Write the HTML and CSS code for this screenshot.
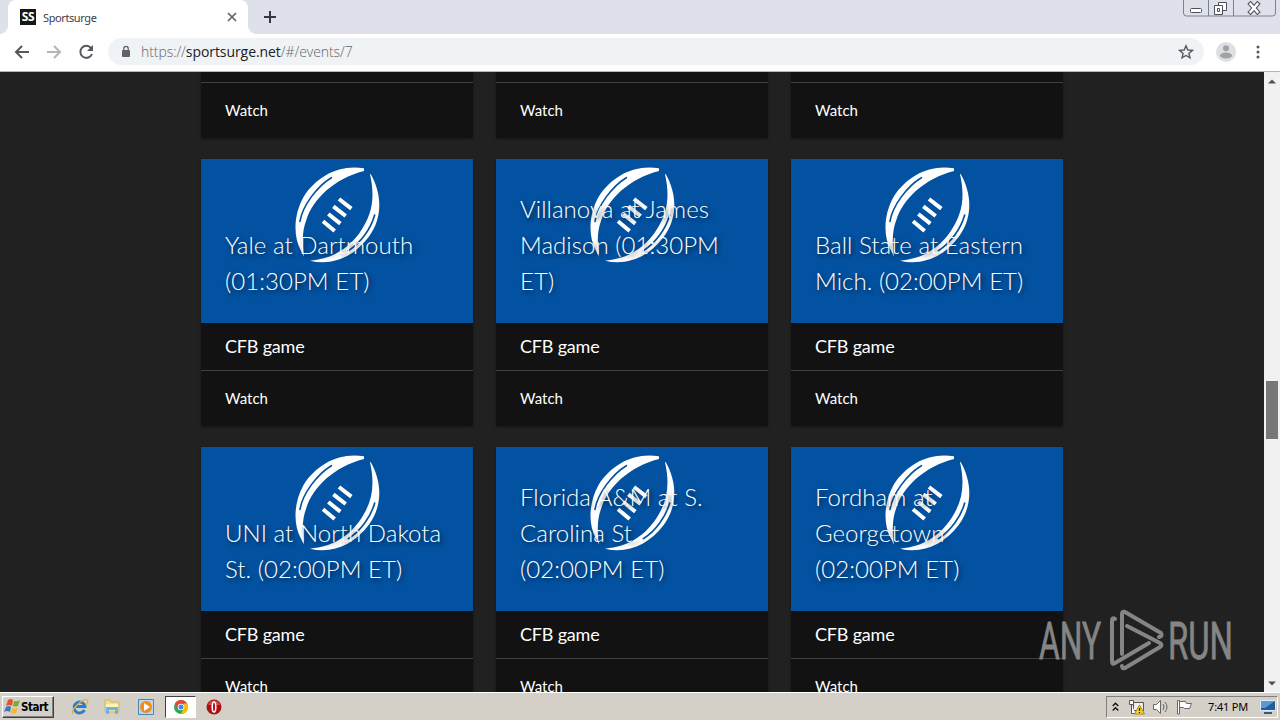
FILE: index.html
```html
<!DOCTYPE html>
<html lang="en">
<head>
<meta charset="utf-8">
<title>Sportsurge</title>
<link rel="stylesheet" href="styles.css">
</head>
<body>
<svg class="defs" width="0" height="0">
  <symbol id="football" viewBox="0 0 300 330">
    <path fill="#fff" d="M222 25C150 12 80 48 41 110C10 164 10 230 32 270L42 290C36 245 37 210 49 180C68 118 132 56 222 33Z"/>
    <path fill="none" stroke="#0352a2" stroke-width="5" stroke-linecap="round" d="M124 53C82 78 37 138 30 184"/>
    <path fill="#fff" d="M242 42C278 105 277 176 236 231C191 291 126 318 60 302C132 296 177 262 208 220C249 162 255 110 240 43Z"/>
    <path fill="none" stroke="#0352a2" stroke-width="5" stroke-linecap="round" d="M254 165C243 205 212 250 175 272"/>
    <path fill="none" stroke="#fff" stroke-width="12" d="M99 184l35 29M115 162l36 29M130 139l37 29M147 117l37 29"/>
  </symbol>
</svg>
<div class="tabstrip">
  <div class="corner-left"></div>
  <div class="tab"><span class="favicon">SS</span><span class="tab-title">Sportsurge</span>
    <svg width="10" height="10" viewBox="0 0 10 10"><path d="M1 1l8 8M9 1l-8 8" stroke="#5f6368" stroke-width="1.7"/></svg>
  </div>
  <svg class="plus" width="14" height="14" viewBox="0 0 14 14"><path d="M7 1v12M1 7h12" stroke="#34373e" stroke-width="2"/></svg>
  <svg class="window-buttons" width="94" height="18" viewBox="0 0 94 18" fill="none" stroke="#7c808a">
    <path d="M.5 0v13q0 3 3 3h86q3 0 3-3V0M25.500 0v16M50.500 0v16"/>
    <g stroke="#4b4f58"><rect x="7.500" y="8.500" width="11" height="4" rx="1" fill="#fff"/><path fill="#fff" d="M35.500 2.500h8v8h-8z"/><path fill="#fff" d="M31.500 5.500h8v9h-8zM34.500 8.500h2v3h-2z"/></g>
    <path d="M67.500 4l7 8M74.500 4l-7 8" stroke="#4b4f58" stroke-width="4.500" stroke-linecap="square"/><path d="M67.500 4l7 8M74.500 4l-7 8" stroke="#fff" stroke-width="2.500" stroke-linecap="square"/>
  </svg>
</div>
<div class="toolbar">
  <svg class="nav" width="100" height="20" viewBox="0 0 100 20" fill="none" stroke-width="2">
    <path stroke="#55585d" d="M21 10H8M14 4l-6 6 6 6"/>
    <path stroke="#b5b6b8" d="M39 10h13M46 4l6 6-6 6"/>
    <path stroke="#55585d" d="M83 6a6 6 0 1 0 1 6"/><path fill="#55585d" d="M85 3v6h-6z"/>
  </svg>
  <div class="address">
    <svg width="10" height="13" viewBox="0 0 10 13"><rect x="1" y="5" width="8" height="7" rx="1" fill="#5f6368"/><path d="M2.800 5V3.500a2.200 2.200 0 0 1 4.400 0V5" fill="none" stroke="#5f6368" stroke-width="1.300"/></svg>
    <span class="url">https://<b>sportsurge.net</b>/#/events/7</span>
    <svg class="star" width="16" height="16" viewBox="0 0 16 16"><path d="M8 1.800l1.800 4.200 4.600.4-3.500 3 1.100 4.500L8 11.500l-4 2.400 1.100-4.500-3.500-3L6.200 6z" fill="none" stroke="#55585d" stroke-width="1.400"/></svg>
  </div>
  <svg width="20" height="20" viewBox="0 0 20 20"><circle cx="10" cy="10" r="10" fill="#dedfe0"/><circle cx="10" cy="6.300" r="3" fill="#a1a2a4"/><ellipse cx="10" cy="13.500" rx="6" ry="3" fill="#a1a2a4"/></svg>
  <svg class="dots" width="4" height="14" viewBox="0 0 4 14" fill="#55585d"><circle cx="2" cy="2" r="1.500"/><circle cx="2" cy="7" r="1.500"/><circle cx="2" cy="12" r="1.500"/></svg>
</div>
<div class="viewport">
  <main class="page">
    <div class="grid">
      <article class="card cut"><div class="content"></div><div class="action">Watch</div></article>
      <article class="card cut"><div class="content"></div><div class="action">Watch</div></article>
      <article class="card cut"><div class="content"></div><div class="action">Watch</div></article>

      <article class="card"><div class="banner"><svg class="ball"><use href="#football"/></svg><h2>Yale at Dartmouth<br>(01:30PM ET)</h2></div><div class="content">CFB game</div><div class="action">Watch</div></article>
      <article class="card"><div class="banner"><svg class="ball"><use href="#football"/></svg><h2>Villanova at James<br>Madison (01:30PM<br>ET)</h2></div><div class="content">CFB game</div><div class="action">Watch</div></article>
      <article class="card"><div class="banner"><svg class="ball"><use href="#football"/></svg><h2>Ball State at Eastern<br>Mich. (02:00PM ET)</h2></div><div class="content">CFB game</div><div class="action">Watch</div></article>

      <article class="card"><div class="banner"><svg class="ball"><use href="#football"/></svg><h2>UNI at North Dakota<br>St. (02:00PM ET)</h2></div><div class="content">CFB game</div><div class="action">Watch</div></article>
      <article class="card"><div class="banner"><svg class="ball"><use href="#football"/></svg><h2>Florida A&amp;M at S.<br>Carolina St.<br>(02:00PM ET)</h2></div><div class="content">CFB game</div><div class="action">Watch</div></article>
      <article class="card"><div class="banner"><svg class="ball"><use href="#football"/></svg><h2>Fordham at<br>Georgetown<br>(02:00PM ET)</h2></div><div class="content">CFB game</div><div class="action">Watch</div></article>
    </div>
  </main>
  <div class="scrollbar">
    <svg width="8" height="5" viewBox="0 0 8 5"><path d="M0 4.500h8L4 .5z" fill="#505050"/></svg>
    <div class="thumb"></div>
    <svg width="8" height="5" viewBox="0 0 8 5"><path d="M0 .5h8L4 4.500z" fill="#505050"/></svg>
  </div>
  <svg class="watermark" width="200" height="70" viewBox="0 0 200 70">
    <g class="wm"><text x="3" y="53" textLength="62" lengthAdjust="spacingAndGlyphs">ANY</text><text x="132" y="53" textLength="65" lengthAdjust="spacingAndGlyphs">RUN</text></g>
    <g fill="none" stroke="#858585" stroke-width="4" stroke-linejoin="round" stroke-linecap="round"><path d="M79 13q-3-2-3 2v40q0 4 3 2l34-20"/><path d="M86 48V8q0-3 3-2l36 21q2 3-2 4"/><path d="M91 20l33 17q3 2 0 4L89 62q-3 1-3-2"/></g>
  </svg>
</div>
<div class="taskbar">
  <div class="start"><svg width="17" height="17" viewBox="0 0 17 17"><path fill="#e6532c" d="M4 2q3-2 5 0L8 8Q5 6 2 8z"/><path fill="#72ae3b" d="M10 3q3 1 6-1l-2 6q-3 1-5 0z"/><path fill="#3979c4" d="M2 9q3-2 5 0l-1 5q-3-2-6 0z"/><path fill="#f3b928" d="M8 10q3 1 6 0l-2 5q-3 1-5 0z"/></svg>Start</div>
  <div class="quick">
    <svg class="q-ie" width="18" height="18" viewBox="0 0 18 18" fill="none"><path d="M13.500 12A5.500 5.500 0 1 1 14 8.500H5" stroke="#267fc9" stroke-width="2.800"/><path d="M2 16C-1 12 12 0 16 2q2 2-1 5" stroke="#e0b23d" stroke-width="1.300"/></svg>
    <svg class="q-folder" width="16" height="17" viewBox="0 0 16 17"><path fill="#f2df92" stroke="#cdb567" d="M1 2h5l1 2h8v10H1z"/><path fill="#fff3b5" d="M2 6h12v3H2z"/><path fill="#6cb4e1" d="M2 9h12v7h-3v-4H5v4H2z"/></svg>
    <svg class="q-media" width="16" height="16" viewBox="0 0 16 16"><path fill="#b9d7ef" stroke="#4489bb" d="M.5.500h15v15H.500z"/><circle cx="8" cy="8" r="6" fill="#f28b18"/><path fill="#fff" d="M6 4l6 4-6 4z"/></svg>
    <div class="active-app"><svg width="14" height="14" viewBox="0 0 14 14"><circle cx="7" cy="7" r="7" fill="#32a753"/><path fill="#ea4335" d="M1 3.500A7 7 0 0 1 13.100 3.500H7L3.500 8z"/><path fill="#fbbc05" d="M13.100 3.500A7 7 0 0 1 7 14l3-6V3.500z"/><circle cx="7" cy="7" r="3.300" fill="#fff"/><circle cx="7" cy="7" r="2.500" fill="#4285f4"/></svg></div>
    <svg class="q-opera" width="16" height="16" viewBox="0 0 16 16"><circle cx="8" cy="8" r="7.500" fill="#a81115"/><path fill="#d94543" d="M2 6a6.300 6.300 0 0 1 12 0z"/><ellipse cx="8" cy="8" rx="1.800" ry="5" fill="#b31317" stroke="#fff" stroke-width="1.500"/></svg>
  </div>
  <div class="tray">
    <svg class="t-up" width="7" height="10" viewBox="0 0 7 10" fill="none" stroke="#111" stroke-width="1.400"><path d="M.7 4l2.800-2.800L6.300 4M.7 8.500l2.800-2.800 2.800 2.800"/></svg>
    <svg class="t-net" width="17" height="16" viewBox="0 0 17 16"><path fill="#eee" stroke="#555" d="M5.500 3.500h10v8h-10z"/><path fill="#fff" stroke="#555" d="M1.500 1.500h4v4h-4zM3.500 5.500v9h4"/><path fill="#f7d727" stroke="#aa8710" d="M11.500 6l5 9h-10z"/><path stroke="#222" stroke-width="1.300" d="M11.500 9v3M11.500 13v1"/></svg>
    <svg class="t-sound" width="18" height="16" viewBox="0 0 18 16" fill="none" stroke="#666"><path fill="#fff" d="M1.500 5.500h3l4-4v13l-4-4h-3z"/><path d="M11 5q2 3 0 6M13 3q4 5 0 10"/></svg>
    <svg class="t-flag" width="17" height="16" viewBox="0 0 17 16"><path fill="#fff" stroke="#666" d="M1.500 15V1.500h2V15zM3.500 2.500h6l1 2h5l-2 5h-5l-1-1h-4z"/></svg>
    <span class="clock">7:41 PM</span>
    <svg width="16" height="14" viewBox="0 0 16 14"><path fill="#235b9f" stroke="#dcebf5" d="M.5.500h15v10H.500z"/><path fill="#5b99d1" d="M1 1h14L5 8H1z"/><path fill="#456" d="M4 12h8v2H4z"/></svg>
  </div>
</div>
</body>
</html>
```

FILE: styles.css
```css
* { box-sizing: border-box; }
body { margin: 0; width: 1280px; height: 720px; overflow: hidden; display: flex; flex-direction: column; background: #212121; font-family: Lato, sans-serif; }
svg { display: block; flex: none; }
.defs { position: absolute; }
.tabstrip { height: 34px; flex: none; display: flex; background: #dee1e9; font-family: "Noto Sans", sans-serif; }
.corner-left { width: 8px; background: radial-gradient(circle at 0 26px, #dee1e9 7.5px, #fff 8px) 0 100% / 8px 34px; clip-path: none; }
.corner-left { background: linear-gradient(#dee1e9, #dee1e9) 0 0 / 8px 26px no-repeat, radial-gradient(circle at 0 0, #dee1e9 7.5px, #fff 8px) 0 26px / 8px 8px no-repeat; }
.tab { width: 240px; position: relative; background: #fff; border-radius: 8px 8px 0 0; display: flex; align-items: center; padding: 0 11px 0 12px; }
.tab::after { content: ""; position: absolute; left: 100%; bottom: 0; width: 8px; height: 8px; background: radial-gradient(circle at 100% 0, #dee1e9 7.5px, #fff 8px); }
.favicon { width: 16px; height: 16px; background: #171717; color: #fff; font: bold 12px/16px "Open Sans", sans-serif; text-align: center; letter-spacing: -.3px; }
.tab-title { flex: 1; margin-left: 7px; font-size: 11px; color: #3c4043; letter-spacing: -.4px; }
.plus { margin: 10px 0 0 15px; }
.window-buttons { margin: 0 3px 0 auto; }
.toolbar { height: 38px; flex: none; display: flex; align-items: center; background: #fff; border-bottom: 1px solid #b5b6b8; padding: 0 20px 2px 8px; }
.address { width: 1096px; height: 27px; border-radius: 14px; background: #f0f3f5; display: flex; align-items: center; padding: 0 10px 0 13px; margin-right: 12px; }
.url { margin-left: 10px; font: 300 14px "Open Sans", sans-serif; color: #62666b; letter-spacing: -.07px; }
.url b { color: #202124; font-weight: 400; }
.star { margin-left: auto; }
.dots { margin-left: auto; }
.viewport { height: 620px; flex: none; display: flex; position: relative; overflow: hidden; }
.page { flex: 1; padding-left: 201px; overflow: hidden; background: #212121; }
.grid { display: grid; grid-template-columns: repeat(3, 272px); gap: 21px 23px; }
.card { background: #121212; color: #fff; border-radius: 2px; box-shadow: 0 1px 3px rgba(0,0,0,.4); }
.banner { height: 164px; position: relative; background: #0352a2; padding: 0 24px 24px; display: flex; align-items: flex-end; }
.ball { position: absolute; left: 89px; top: 1px; width: 100px; height: 110px; }
h2 { position: relative; margin: 0; font-weight: 300; font-size: 24px; line-height: 36px; letter-spacing: .05px; white-space: nowrap; text-shadow: 2px 2px 5px rgba(0,0,0,.7); }
.content { height: 48px; padding-left: 24px; line-height: 47px; font-size: 18px; letter-spacing: -.2px; border-bottom: 1px solid #414141; }
.cut .content { height: 11px; }
.action { height: 55px; padding-left: 24px; line-height: 55px; font-size: 15px; }
.scrollbar { width: 16px; background: #f1f1f1; display: flex; flex-direction: column; align-items: center; padding: 7px 0 6px; }
.thumb { width: 12px; height: 58px; background: #777; margin: 297px 0 auto; }
.watermark { position: absolute; left: 1036px; top: 534px; }
.wm { fill: #858585; stroke: #858585; stroke-width: .8px; font: 52px Roboto, sans-serif; }
.taskbar { height: 28px; flex: none; display: flex; align-items: center; background: #d4d0c8; border-top: 1px solid #fff; padding: 2px; font-family: "DejaVu Sans", sans-serif; }
.start { width: 52px; height: 22px; display: flex; align-items: center; padding-left: 1px; font: bold 11.5px "DejaVu Sans Condensed", "DejaVu Sans", sans-serif; letter-spacing: -.5px; border: 1px solid; border-color: #fff #404040 #404040 #fff; box-shadow: inset -1px -1px #808080; }
.quick { display: flex; align-items: center; margin-left: 17px; }
.q-folder { margin-left: 15px; }
.q-media { margin-left: 18px; }
.active-app { margin-left: 11px; width: 31px; height: 22px; background: #fff; border: 1px solid; border-color: #404040 #fff #fff #404040; display: flex; align-items: center; justify-content: center; }
.q-opera { margin-left: 10px; }
.tray { width: 172px; height: 22px; margin-left: auto; border: 1px solid; border-color: #808080 #fff #fff #808080; display: flex; align-items: center; padding: 0 1px 0 5px; }
.t-net { margin-left: 9px; }
.t-sound { margin-left: 7px; }
.t-flag { margin-left: 6px; }
.clock { margin: 0 12px 0 auto; font: 11px "Noto Sans", sans-serif; letter-spacing: -.2px; white-space: nowrap; color: #000; }
```
